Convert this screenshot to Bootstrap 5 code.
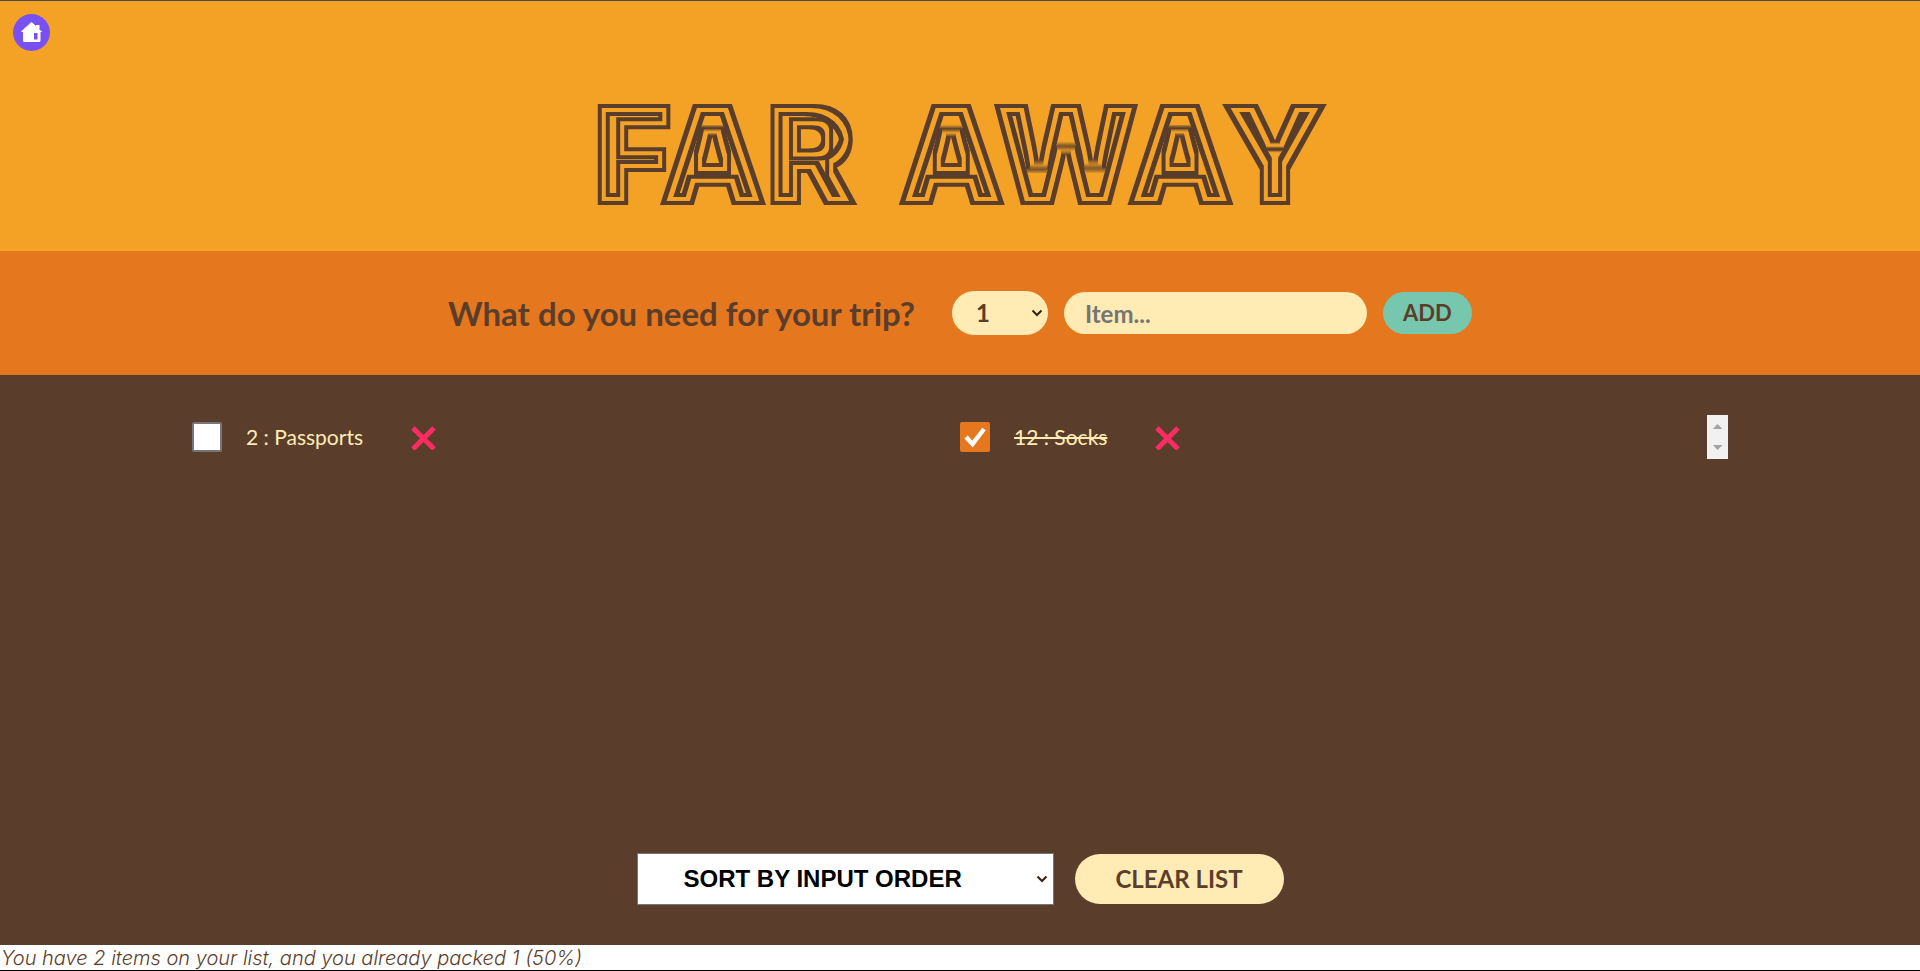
<!DOCTYPE html>
<html lang="en">
<head>
<meta charset="utf-8">
<meta name="viewport" content="width=device-width, initial-scale=1">
<title>Far Away</title>
<link href="https://cdn.jsdelivr.net/npm/bootstrap@5.3.0/dist/css/bootstrap.min.css" rel="stylesheet">
<style>
  :root { --brown:#5a3e2b; --cream:#ffebb3; --amber:#f4a226; --orange:#e5771f; --mint:#76c7ad; }
  body { font-family:Lato,"Open Sans",sans-serif; color:var(--brown); border-top:1px solid #4a4a4a; border-bottom:1px solid #000; }
  .masthead { background:var(--amber); height:250px; padding-top:56px; }
  .home-link { top:13px; left:13px; }
  .masthead h1 { font:900 134px/1 Inter,sans-serif; padding:0 8px; -webkit-text-stroke:4px var(--brown); filter:url(#inline-stripes); }
  .add-form { background:var(--orange); padding:40px 0; min-height:124px; }
  .add-form h3 { font-size:33px; font-weight:700; line-height:44px; margin-right:37px; }
  .pill { background-color:var(--cream); color:var(--brown); border:0; border-radius:50rem; font-weight:700; font-size:24px; line-height:30px; }
  .chevron { appearance:none; background-repeat:no-repeat; background-size:12px 8px; background-image:url("data:image/svg+xml,%3Csvg xmlns='http://www.w3.org/2000/svg' viewBox='0 0 12 8'%3E%3Cpath d='M1.5 1.5 6 6l4.500-4.500' fill='none' stroke='%23332211' stroke-width='2'/%3E%3C/svg%3E"); }
  .quantity { width:96px; height:44px; padding:0 24px; background-position:right 5px center; }
  .item-box { width:303px; height:42px; padding:0 21px; }
  .item-box::placeholder { color:#757575; opacity:1; }
  .add-btn { width:89px; height:42px; background-color:var(--mint); font-size:22px; }
  .packing { background:var(--brown); color:var(--cream); padding:40px 0; }
  .packing-list { width:80%; }
  .packing-list li { height:44px; font-size:20px; }
  .packing .tick { width:30px; height:30px; margin:0 24px 0 0; border:2px solid #767676; border-radius:2px; background:#fff; }
  .packing .tick:checked { border:0; background:var(--orange) url("data:image/svg+xml,%3Csvg xmlns='http://www.w3.org/2000/svg' viewBox='0 0 30 30'%3E%3Cpath d='M6 15l6.500 7L24 7' fill='none' stroke='white' stroke-width='4.500'/%3E%3C/svg%3E"); }
  .packing-list label { font-size:21px; }
  .remove { margin-left:48px; line-height:0; }
  .scroller { width:21px; height:44px; background:#f1f1f1; }
  .controls { gap:21px; }
  .sorter { width:417px; height:52px; padding:0 46px; border:1px solid #767676; background-color:#fff; color:#000; font:700 24px/30px "Liberation Sans",sans-serif; background-position:right 5px center; }
  .clear-btn { width:209px; height:50px; }
  .stats { font:italic 300 20px/24px Inter,Lato,sans-serif; background:#fff; padding:1px 0 0 1px; }
</style>
</head>
<body class="d-flex flex-column min-vh-100">
<svg class="position-absolute" width="0" height="0" aria-hidden="true">
  <filter id="inline-stripes" x="0" y="0" width="100%" height="100%">
    <feMorphology in="SourceGraphic" operator="erode" radius="4" result="a"/>
    <feMorphology in="SourceGraphic" operator="erode" radius="8" result="b"/>
    <feMorphology in="SourceGraphic" operator="erode" radius="12" result="c"/>
    <feComposite in="SourceGraphic" in2="a" operator="out" result="outer"/>
    <feComposite in="b" in2="c" operator="out" result="inner"/>
    <feMerge><feMergeNode in="outer"/><feMergeNode in="inner"/></feMerge>
  </filter>
</svg>
<header class="masthead position-relative d-flex align-items-center justify-content-center">
  <a class="home-link position-absolute d-block lh-1" href="#" aria-label="Home">
    <svg class="d-block" width="37" height="37" viewBox="0 0 37 37"><circle cx="18.500" cy="18.500" r="18.500" fill="#7950f2"/><path fill="#fff" d="M18.500 8 23 12V11h3.500v4.500L29 17.500V18h-1.500v8.500q0 1.500-1.500 1.500H11.500Q10 28 10 26.500V18H8.500v-1z"/><path fill="#7950f2" d="M21 19h3.500v6.500H21z"/></svg>
  </a>
  <h1 class="m-0"><span class="me-3">FAR</span> AWAY</h1>
</header>
<form class="add-form d-flex align-items-center justify-content-center">
  <h3 class="mb-0">What do you need for your trip?</h3>
  <div class="d-flex align-items-center gap-3">
    <select class="pill chevron quantity" aria-label="Quantity"><option>1</option><option>2</option><option>3</option></select>
    <input class="pill item-box" type="text" placeholder="Item..." aria-label="Item">
    <button class="pill add-btn p-0" type="button">ADD</button>
  </div>
</form>
<main class="packing flex-grow-1 d-flex flex-column align-items-center justify-content-between">
  <div class="packing-list position-relative">
    <ul class="row g-0 list-unstyled m-0">
      <li class="col-6 d-flex align-items-center">
        <input class="form-check-input tick" type="checkbox" id="passports">
        <label for="passports">2 : Passports</label>
        <button class="remove btn p-0 border-0" type="button" aria-label="Remove passports"><svg width="25" height="25" viewBox="0 0 25 25"><path d="M2 3 23 24M23 3 2 24" stroke="#fa2c62" stroke-width="5"/></svg></button>
      </li>
      <li class="col-6 d-flex align-items-center">
        <input class="form-check-input tick" type="checkbox" id="socks" checked>
        <label class="text-decoration-line-through" for="socks">12 : Socks</label>
        <button class="remove btn p-0 border-0" type="button" aria-label="Remove socks"><svg width="25" height="25" viewBox="0 0 25 25"><path d="M2 3 23 24M23 3 2 24" stroke="#fa2c62" stroke-width="5"/></svg></button>
      </li>
    </ul>
    <svg class="scroller position-absolute top-0 end-0" viewBox="0 0 21 44" aria-hidden="true"><path fill="#a3a3a3" d="M6 14h9.500L10.500 9zM6 30h9.500l-5 5z"/></svg>
  </div>
  <div class="controls d-flex align-items-center justify-content-center">
    <select class="chevron sorter" aria-label="Sort"><option>SORT BY INPUT ORDER</option><option>SORT BY DESCRIPTION</option><option>SORT BY PACKED STATUS</option></select>
    <button class="pill clear-btn p-0" type="button">CLEAR LIST</button>
  </div>
</main>
<footer class="stats">You have 2 items on your list, and you already packed 1 (50%)</footer>
<script src="https://cdn.jsdelivr.net/npm/bootstrap@5.3.0/dist/js/bootstrap.bundle.min.js"></script>
</body>
</html>
